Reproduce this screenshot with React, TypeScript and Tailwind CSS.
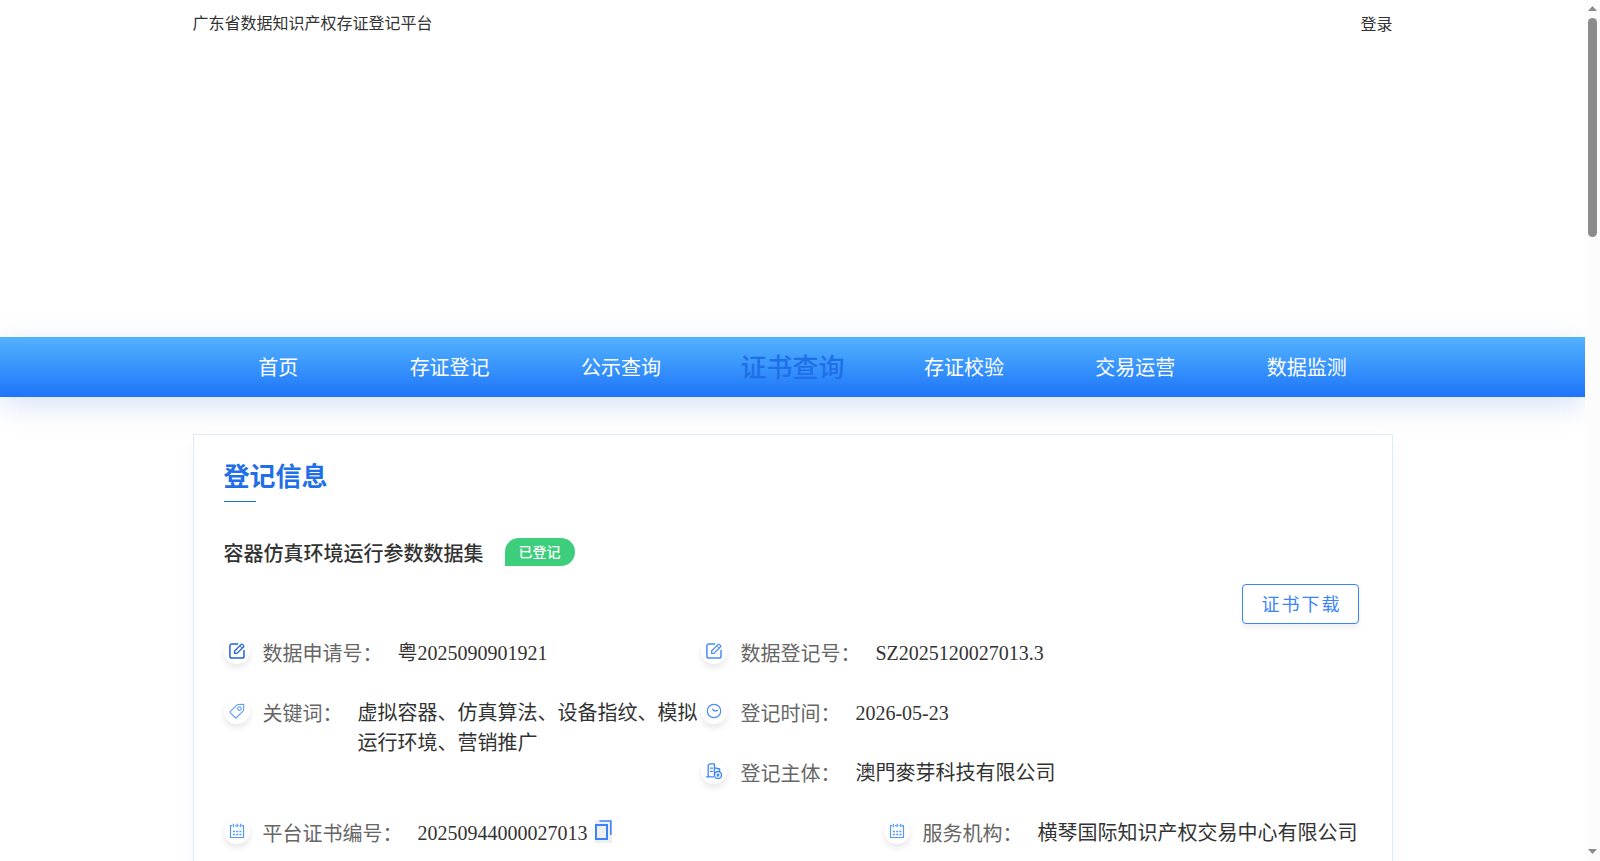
import React from 'react';

const NAV_ITEMS = ['首页', '存证登记', '公示查询', '证书查询', '存证校验', '交易运营', '数据监测'];
const ACTIVE_ITEM = '证书查询';

const EditGlyph: React.FC<{ color: string }> = ({ color }) => (
  <svg className="h-4 w-4" viewBox="0 0 16 16" fill="none" stroke={color} strokeWidth="1.5" strokeLinecap="round" strokeLinejoin="round">
    <path d="M8.6 1H2.8A1.9 1.9 0 0 0 .9 2.9v10.3a1.9 1.9 0 0 0 1.9 1.9h10.3a1.9 1.9 0 0 0 1.9-1.9V7.6" />
    <path d="M12.2 1.4 5.6 8v2.4H8l6.6-6.6a.9.9 0 0 0 0-1.2l-1.2-1.2a.9.9 0 0 0-1.2 0Z" strokeWidth="1.3" />
    <path d="m11 2.8 2.2 2.2" strokeWidth="1" />
  </svg>
);

const TagGlyph = () => (
  <svg className="h-4 w-4" viewBox="0 0 16 16" fill="none" stroke="#5f9bfa" strokeWidth="1.1" strokeLinejoin="round">
    <path d="M8.8 1.5 14 1.3a.8.8 0 0 1 .8.8l-.3 5.1a1 1 0 0 1-.3.6L7.5 14.5a1 1 0 0 1-1.4 0L1.4 9.8a1 1 0 0 1 0-1.4L8.1 1.8a1 1 0 0 1 .7-.3Z" />
    <circle cx="10.4" cy="5.6" r="1.8" />
  </svg>
);

const ClockGlyph = () => (
  <svg className="h-4 w-4" viewBox="0 0 16 16" fill="none" stroke="#4a8df8" strokeWidth="1.2">
    <circle cx="8" cy="8" r="6.7" />
    <path d="M6.2 6 8.6 8.1l3.6-.7" strokeWidth="1.4" />
  </svg>
);

const CompanyGlyph = () => (
  <svg className="h-4 w-4" viewBox="0 0 16 16" fill="none" stroke="#3a84fb" strokeWidth="1.3" strokeLinecap="round" strokeLinejoin="round">
    <path d="M.6 13.8h7M2.2 13.6V2.2L4 .8h4.4v11.4" />
    <path d="M8.8 4.8 13.6 6v1.6M4.6 5.2h1.8M4.6 8.4h1.8" />
    <circle cx="12" cy="12" r="3.5" />
    <path d="m12 10.2.6 1.2 1.2.2-.9.9.2 1.2-1.1-.6-1.1.6.2-1.2-.9-.9 1.2-.2Z" fill="#3a84fb" strokeWidth=".3" />
  </svg>
);

const CalendarGlyph = () => (
  <svg className="h-4 w-4" viewBox="0 0 16 16" fill="none" stroke="#5596fa" strokeWidth="1.2">
    <path d="M3 2.6H1.5v11.9h13V2.6H13M6 2.6h1M9.4 2.6h1" strokeLinejoin="round" />
    <path d="M4.4.8v3.4M8.1.8v3.4M11.8.8v3.4" strokeWidth="1.3" />
    <path d="M4 8.5h2M7.2 8.5h2M10.4 8.5h2M4 11.5h2M7.2 11.5h2M10.4 11.5h2" strokeWidth="1.3" />
  </svg>
);

interface FieldProps {
  icon: React.ReactNode;
  label: string;
  children: React.ReactNode;
}

const Field: React.FC<FieldProps> = ({ icon, label, children }) => (
  <div className="flex items-start">
    <div className="mr-[13px] h-[34px] shrink-0">
      <div className="flex h-[26px] w-[26px] items-center justify-center rounded-full bg-white shadow-[0_4px_6px_rgba(0,0,0,0.09)]">
        {icon}
      </div>
    </div>
    <span className="mr-[15px] shrink-0 pt-px text-[#666]">{label}：</span>
    <div>{children}</div>
  </div>
);

const ScrollBar = () => (
  <div className="flex h-full w-[15px] shrink-0 flex-col items-center bg-[#fcfcfc]">
    <svg className="h-[18px] w-[15px] shrink-0" viewBox="0 0 15 18">
      <path d="M3 11 7.5 6l4.5 5Z" fill="#8b8b8b" />
    </svg>
    <div className="h-[219px] w-[9px] rounded-full bg-[#8b8b8b]" />
    <svg className="mt-auto h-[18px] w-[15px] shrink-0" viewBox="0 0 15 18">
      <path d="M3 6h9l-4.5 5Z" fill="#8b8b8b" />
    </svg>
  </div>
);

const App: React.FC = () => {
  return (
    <div className="flex h-[861px] w-full overflow-hidden bg-white font-['Liberation_Serif','Noto_Sans_CJK_SC',serif] text-[#333]">
      <div className="min-w-0 flex-1 overflow-hidden">
        {/* Top bar */}
        <header className="mx-auto flex h-[337px] w-[1200px] justify-between pt-3 text-base leading-6">
          <span>广东省数据知识产权存证登记平台</span>
          <span className="pt-px">登录</span>
        </header>

        {/* Main navigation */}
        <nav className="h-[60px] bg-linear-to-b from-[#53b2ff] to-[#1f74f8] shadow-[0_8px_30px_rgba(30,90,200,0.18)]">
          <ul className="mx-auto flex h-full w-[1200px] text-center text-xl leading-[62px] text-white">
            {NAV_ITEMS.map((item) => (
              <li
                key={item}
                className={item === ACTIVE_ITEM ? 'flex-1 text-[26px] leading-[64px] font-medium text-[#216fe8]' : 'flex-1'}
              >
                {item}
              </li>
            ))}
          </ul>
        </nav>

        {/* Registration info */}
        <main className="mx-auto mt-[37px] h-[900px] w-[1200px] border border-[#dfeaff] bg-white px-[30px] shadow-[0_10px_20px_rgba(40,80,180,0.04)]">
          <h2 className="mt-[24px] h-[42px] text-[26px] leading-[38px] font-bold text-[#216fe8]">登记信息</h2>
          <div className="h-px w-8 bg-[#216fe8]" />

          <div className="mt-[36px] flex h-[30px] items-start">
            <h3 className="text-xl leading-[32px] font-medium">容器仿真环境运行参数数据集</h3>
            <span className="ml-[21px] h-7 w-[70px] rounded-[14px] rounded-bl-none bg-[#3dce7c] text-center text-sm leading-[29px] font-medium text-white">
              已登记
            </span>
          </div>

          <div className="mt-4 flex justify-end pr-[3px]">
            <button className="h-10 w-[117px] rounded-[4px] border border-[#3a84fb] bg-white pt-0.5 pl-[3px] text-lg leading-9 tracking-[2px] text-[#3a84fb] shadow-[0_4px_5px_rgba(0,0,0,0.06)]">
              证书下载
            </button>
          </div>

          <div className="mt-[14px] flex text-xl leading-[30px]">
            <div className="flex w-[477.9px] flex-col gap-[26px]">
              <Field icon={<EditGlyph color="#2264dc" />} label="数据申请号">粤2025090901921</Field>
              <Field icon={<TagGlyph />} label="关键词">虚拟容器、仿真算法、设备指纹、模拟运行环境、营销推广</Field>
            </div>
            <div className="flex flex-col gap-[26px]">
              <Field icon={<EditGlyph color="#4a8df8" />} label="数据登记号">SZ2025120027013.3</Field>
              <Field icon={<ClockGlyph />} label="登记时间">2026-05-23</Field>
              <Field icon={<CompanyGlyph />} label="登记主体">澳門麥芽科技有限公司</Field>
            </div>
          </div>

          <div className="mt-[26px] flex justify-between pr-1 text-xl leading-[30px]">
            <Field icon={<CalendarGlyph />} label="平台证书编号">
              <div className="flex">
                20250944000027013
                <svg className="mt-0.5 ml-[7.5px] h-[23px] w-[17px]" viewBox="0 0 17 23" fill="none" stroke="#3a84fb">
                  <path d="M0 0h17v23H0Z" fill="#efefef" stroke="none" />
                  <path d="M1 5h11v14H1Z" strokeWidth="2" />
                  <path d="M4.5 1h11.3v14" strokeWidth="1.6" />
                </svg>
              </div>
            </Field>
            <Field icon={<CalendarGlyph />} label="服务机构">横琴国际知识产权交易中心有限公司</Field>
          </div>
        </main>
      </div>
      <ScrollBar />
    </div>
  );
};

export default App;
